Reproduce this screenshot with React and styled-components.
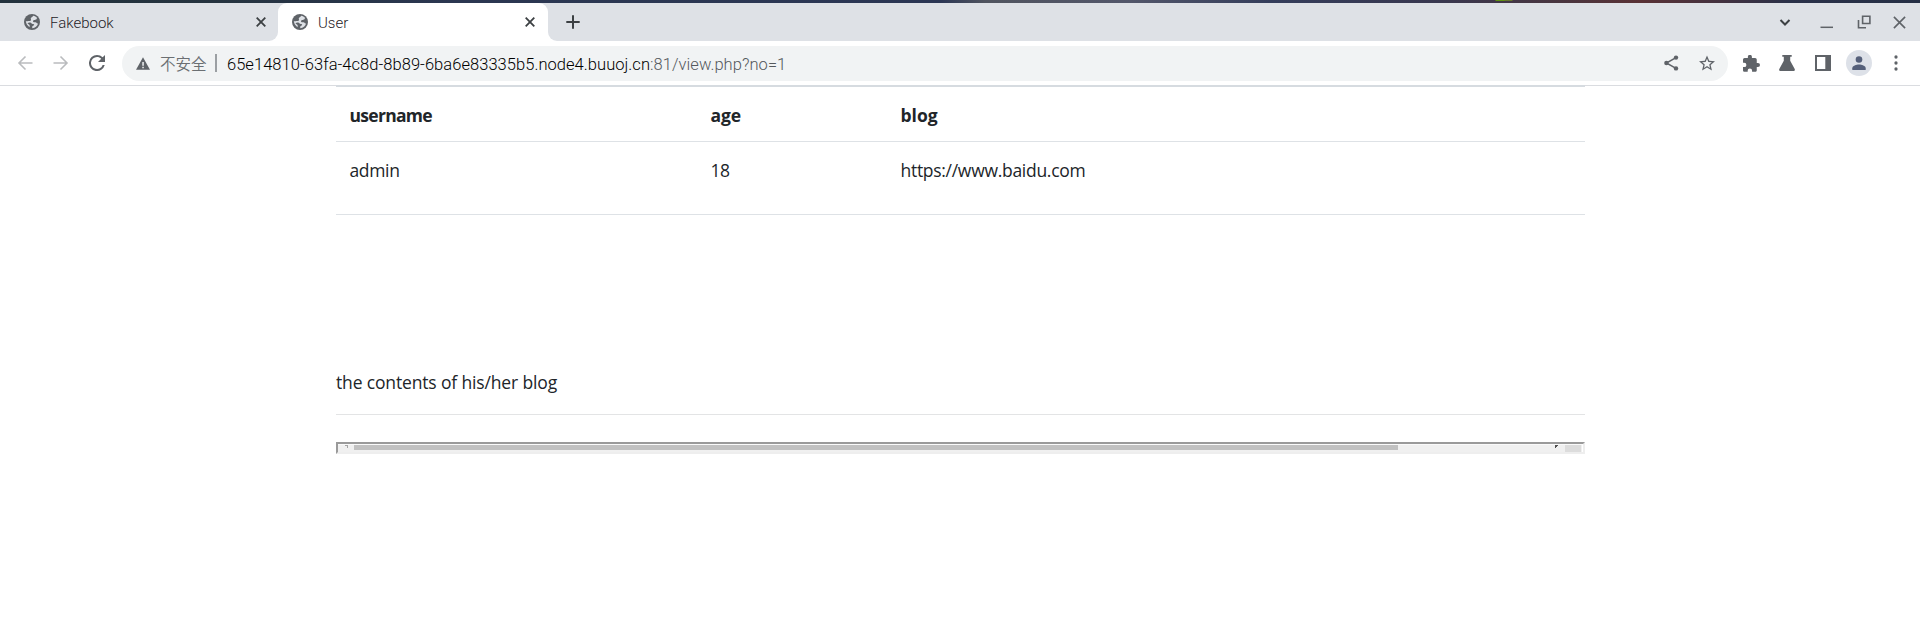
import React from 'react';
import styled, { createGlobalStyle } from 'styled-components';

const GlobalStyle = createGlobalStyle`
  * { box-sizing: border-box; }
  body { margin: 0; background: #fff; overflow: hidden; }
`;

const chromeFont = `Roboto, "Noto Sans CJK SC", sans-serif`;

const Window = styled.div`
  width: 1920px;
  height: 635px;
  background: #fff;
  overflow: hidden;
`;
const DesktopEdge = styled.div`
  height: 3px;
  background:
    linear-gradient(90deg, transparent 1495px, #5f9010 1496px, #5f9010 1504px, #65742c 1505px, #65742c 1512px, transparent 1513px) no-repeat 0 0 / 1514px 1px,
    linear-gradient(90deg, #22323d 0, #25333f 220px, #2b3751 450px, #2b3654 940px, #50545f 985px, #52566a 1130px, #343d5b 1270px, #38374f 1440px, #49353f 1560px, #593135 1640px, #43313f 1720px, #2a3149 1790px, #252f45 1920px);
`;
const TabStrip = styled.div`
  display: flex;
  height: 38px;
`;
const Tab = styled.div`
  flex: none;
  display: flex;
  align-items: center;
  width: ${(p) => p.$width}px;
  height: 38px;
  padding: 0 ${(p) => p.$right}px 0 ${(p) => p.$left}px;
  background: ${(p) => (p.$active ? '#fff' : '#dee1e6')};
  border-radius: ${(p) => (p.$active ? '9px 9px 0 0' : '0 0 9px 0')};
`;
const ActiveTabBack = styled.div`
  flex: none;
  background: linear-gradient(#dee1e6 50%, #fff 50%);
`;
const TabTitle = styled.span`
  flex: 1;
  margin-left: 10px;
  padding-top: 1px;
  font: 350 15px/20px ${chromeFont};
  color: #1f2226;
`;
const StripRest = styled.div`
  flex: 1;
  display: flex;
  align-items: center;
  justify-content: space-between;
  padding: 0 14px 0 17.5px;
  background: #dee1e6;
  border-radius: 0 0 0 9px;
`;
const WindowButtons = styled.div`
  display: flex;
  align-items: center;
  gap: 22.5px;
`;
const TabSearch = styled.div`
  margin-right: 7px;
`;
const Icon = styled.svg`
  display: block;
  flex: none;
  width: ${(p) => p.$w || 16}px;
  height: ${(p) => p.$h || p.$w || 16}px;
  fill: ${(p) => (p.$stroke ? 'none' : p.$color || '#5f6368')};
  stroke: ${(p) => (p.$stroke ? p.$color || '#5f6368' : 'none')};
  stroke-width: ${(p) => p.$stroke || 0};
`;
const Toolbar = styled.div`
  display: flex;
  align-items: center;
  height: 44px;
  padding: 0 16px;
`;
const NavButtons = styled.div`
  display: flex;
  align-items: center;
  gap: 20px;
  width: 106px;
  padding-left: 1px;
`;
const AddressBar = styled.div`
  display: flex;
  align-items: center;
  width: 1606px;
  height: 35px;
  padding: 0 13px 0 14px;
  border-radius: 18px;
  background: #f1f3f4;
`;
const Security = styled.span`
  width: 55px;
  margin-left: 10px;
  font: 350 15.5px/24px "Noto Sans CJK SC", sans-serif;
  color: #6b6f73;
`;
const Divider = styled.i`
  width: 2px;
  height: 18px;
  background: #9b9fa3;
`;
const Url = styled.span`
  flex: 1;
  margin-left: 10px;
  padding-top: 3px;
  font: 350 16.5px/24px ${chromeFont};
  letter-spacing: 0.05px;
  color: #000;
  white-space: nowrap;
`;
const UrlPath = styled.span`
  color: #55595d;
`;
const AddressActions = styled.div`
  display: flex;
  align-items: center;
  gap: 20px;
`;
const Extensions = styled.div`
  display: flex;
  align-items: center;
  gap: 19.5px;
  margin-left: 15px;
`;
const Avatar = styled.div`
  display: grid;
  place-items: center;
  width: 26px;
  height: 26px;
  margin: 0 -3.5px 0 -4px;
  border-radius: 50%;
  background: #dde1e8;
`;
const Page = styled.main`
  height: 550px;
  border-top: 1px solid #dadce0;
  font: 400 17.5px/27px "Open Sans", "Noto Sans", sans-serif;
  color: #212529;
`;
const Container = styled.div`
  width: 1249px;
  margin: -1px 0 0 336px;
`;
const Table = styled.div`
  border-top: 2px solid #d6dbe0;
`;
const Row = styled.div`
  display: grid;
  grid-template-columns: 361px 190px 1fr;
  height: ${(p) => p.$height}px;
  padding: 15px 0 0 13.5px;
  border-bottom: 1px solid #dee2e6;
  font-weight: ${(p) => (p.$head ? 700 : 400)};
`;
const Label = styled.span`
  letter-spacing: ${(p) => p.$spacing || 0}px;
`;
const BlogCaption = styled.p`
  margin: 154px 0 0;
  height: 45px;
`;
const Rule = styled.hr`
  margin: 0 0 27px;
  border: 0;
  border-top: 1px solid #e3e4e5;
`;
const Frame = styled.div`
  height: 12px;
  border: 2px solid;
  border-color: #9a9a9a #eee #eee #9a9a9a;
  background: #f0f0f0;
`;
const ScrollTrack = styled.div`
  display: flex;
  align-items: flex-start;
  height: 8px;
  padding: 0 1px 0 7px;
  border-top: 1px solid #fafafa;
  border-right: 1px solid #fff;
`;
const Thumb = styled.div`
  width: 1045px;
  height: 5px;
  margin: 0 157px 0 6px;
  background: #c1c1c1;
`;
const Corner = styled.div`
  width: 16px;
  height: 7px;
  margin-left: 7px;
  background: #dcdcdc;
`;

const Globe = () => (
  <Icon viewBox="0 0 16 16" $w={16}>
    <circle cx="8" cy="8" r="8" />
    <path fill="#dee1e6" d="M9.1 1.8C8.8 3.2 7.5 3 6.9 4c-.5.9.5 1.5.1 2.2-.5.9-1.7.7-2.7.8-.9.1-1.7.5-2.5.1.3 2.5 1.4 4.6 3.7 6.1.2-1 .4-1.8-.2-2.5-.5-.5-1.6-.6-1.7-1.7 1.2-.7 2.5-.8 3.5-.1.8.6 1 .9 2.2 1 .9.1 1.1.8.5 1.3-.6.6-1.5.7-1.6 1.7-.1.6.3.9.1 1.4 2.8-.2 5.1-2 5.8-4.7-1.1.1-1.3-.5-2-1-.8-.5-2.1.1-2.8-.6-.7-.8.1-1.5.8-1.9.8-.5 1.7-.3 2.4-.9.4-.4.2-.9.7-1.1-1-1.2-2.4-2.1-4.1-2.3Z" />
  </Icon>
);
const Cross = ({ w = 10, s = 1.8, color = '#3c4043' }) => (
  <Icon viewBox="0 0 10 10" $w={w} $stroke={s} $color={color}><path d="m.7.7 8.6 8.6m0-8.6L.7 9.3" /></Icon>
);

export default function App() {
  return (
    <>
      <GlobalStyle />
      <Window>
        <DesktopEdge />
        <TabStrip>
          <Tab $width={278} $left={24} $right={12}>
            <Globe /><TabTitle>Fakebook</TabTitle><Cross />
          </Tab>
          <ActiveTabBack>
            <Tab $active $width={270} $left={14} $right={13}>
              <Globe /><TabTitle>User</TabTitle><Cross />
            </Tab>
          </ActiveTabBack>
          <StripRest>
            <Icon viewBox="0 0 14 14" $w={14} $stroke={2} $color="#3c4043"><path d="M7 .3v13.4M.3 7h13.4" /></Icon>
            <WindowButtons>
              <TabSearch>
                <Icon viewBox="0 0 12 12" $w={12} $stroke={2} $color="#3c4043"><path d="m1.5 4 4.5 4.5L10.500 4" /></Icon>
              </TabSearch>
              <Icon viewBox="0 0 14 14" $w={14} $stroke={1.5}><path d="M.5 12.300h12.500" /></Icon>
              <Icon viewBox="0 0 14 14" $w={14} $stroke={1.6}><path d="M5.600 1.300h7.300V8.500H5.600zM1.500 5v7.700H9" /></Icon>
              <Cross w={13} s={1.25} color="#5f6368" />
            </WindowButtons>
          </StripRest>
        </TabStrip>
        <Toolbar>
          <NavButtons>
            <Icon viewBox="0 0 16 16" $w={16} $stroke={1.6} $color="#babcbe"><path d="M15.500 8H2m6.500-6.500L2 8l6.500 6.500" /></Icon>
            <Icon viewBox="0 0 16 16" $w={16} $stroke={1.6} $color="#babcbe"><path d="M.5 8H14M7.500 1.500 14 8l-6.500 6.500" /></Icon>
            <Icon viewBox="4 4 16 16" $w={16}><path d="M17.650 6.350A7.960 7.960 0 0 0 12 4a8 8 0 1 0 7.730 10h-2.080A6 6 0 1 1 12 6c1.660 0 3.140.690 4.220 1.780L13 11h7V4l-2.350 2.350z" /></Icon>
          </NavButtons>
          <AddressBar>
            <Icon viewBox="0 0 14 13" $w={14} $h={13}><path fillRule="evenodd" d="M7 .3 14 12.700H0ZM6.300 5v3.700h1.500V5Zm0 4.800v1.400h1.500V9.800Z" /></Icon>
            <Security>不安全</Security>
            <Divider />
            <Url>65e14810-63fa-4c8d-8b89-6ba6e83335b5.node4.buuoj.cn<UrlPath>:81/view.php?no=1</UrlPath></Url>
            <AddressActions>
              <Icon viewBox="0 0 15 16" $w={15} $h={16}>
                <circle cx="12" cy="2.600" r="2.200" /><circle cx="2.400" cy="8" r="2.200" /><circle cx="12" cy="13.400" r="2.200" />
                <path d="M12 2.600 2.400 8l9.600 5.400" fill="none" stroke="#5f6368" strokeWidth="1.500" />
              </Icon>
              <Icon viewBox="2 2 20 19" $w={16} $h={16}><path d="m22 9.240-7.190-.620L12 2 9.190 8.630 2 9.240l5.460 4.730L5.820 21 12 17.270 18.180 21l-1.630-7.030L22 9.240zM12 15.400l-3.760 2.270 1-4.280-3.320-2.880 4.380-.380L12 6.100l1.710 4.040 4.380.380-3.320 2.880 1 4.280L12 15.400z" /></Icon>
            </AddressActions>
          </AddressBar>
          <Extensions>
            <Icon viewBox="2 1.500 21 20.500" $w={17}><path d="M20.500 11H19V7c0-1.100-.9-2-2-2h-4V3.500a2.500 2.500 0 0 0-5 0V5H4c-1.100 0-1.990.9-1.990 2v3.800H3.500a2.700 2.700 0 0 1 0 5.400H2V20c0 1.100.9 2 2 2h3.800v-1.500a2.700 2.700 0 0 1 5.400 0V22H17c1.100 0 2-.9 2-2v-4h1.500a2.500 2.500 0 0 0 0-5z" /></Icon>
            <Icon viewBox="0 0 16 16" $w={16}><path d="M3.300 0h9.400v1.700h-1.500v4l4.500 8.300c.5 1-.2 2-1.300 2H1.600C.5 16-.2 15 .3 14l4.500-8.300v-4H3.300Z" /></Icon>
            <Icon viewBox="0 0 16 16" $w={16}><path fillRule="evenodd" d="M0 0h16v16H0Zm2 2v12h8.300V2Z" /></Icon>
            <Avatar>
              <Icon viewBox="0 0 14 14" $w={14} $color="#55607a"><circle cx="7" cy="3.500" r="3.300" /><path d="M.3 14v-1.800C.3 9.800 4.400 8.600 7 8.600s6.700 1.200 6.700 3.600V14Z" /></Icon>
            </Avatar>
            <Icon viewBox="0 0 16 16" $w={16}><circle cx="8" cy="2" r="1.650" /><circle cx="8" cy="8" r="1.650" /><circle cx="8" cy="14" r="1.650" /></Icon>
          </Extensions>
        </Toolbar>
        <Page>
          <Container>
            <Table>
              <Row $head $height={55}><Label $spacing={-0.7}>username</Label><Label $spacing={-0.1}>age</Label><Label>blog</Label></Row>
              <Row $height={73}><Label $spacing={-0.35}>admin</Label><Label $spacing={-0.5}>18</Label><Label $spacing={-0.29}>https://www.baidu.com</Label></Row>
            </Table>
            <BlogCaption><Label $spacing={-0.15}>the contents of his/her blog</Label></BlogCaption>
            <Rule />
            <Frame>
              <ScrollTrack>
                <Icon viewBox="0 0 3 3" $w={3} $color="#a5a5a5"><path d="M0 0h3v3H2V1H0Z" /></Icon>
                <Thumb />
                <Icon viewBox="0 0 3 3" $w={3} $color="#505050"><path d="M0 0h3v1H2v1H1v1H0Z" /></Icon>
                <Corner />
              </ScrollTrack>
            </Frame>
          </Container>
        </Page>
      </Window>
    </>
  );
}
